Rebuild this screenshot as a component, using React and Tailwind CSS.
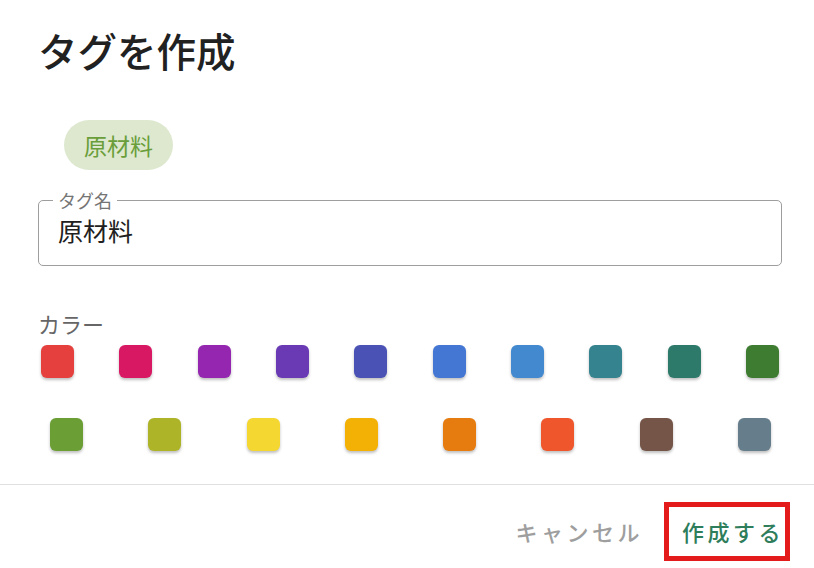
import React from "react";

const row1 = ["#e5403d", "#d91864", "#9526b0", "#6a3ab5", "#4a52b5", "#4477d4", "#4389d0", "#35838e", "#2d7a6a", "#3e7d31"];
const row2 = ["#6b9f35", "#adb428", "#f5d732", "#f3b105", "#e67c10", "#f0562c", "#745548", "#667d8c"];

function Swatch({ c }) {
  return <div className="w-[33px] h-[33px] rounded-[6px] shadow-[0_2px_3px_rgba(0,0,0,0.25)]" style={{ backgroundColor: c }} />;
}

export default function App() {
  const font = { fontFamily: '"Noto Sans CJK JP", "Noto Sans", sans-serif' };
  return (
    <div className="w-[814px] h-[568px] bg-white flex flex-col overflow-hidden" style={font}>
      <div className="pl-[38px] pr-[32px] pt-[22px]">
        <h1 className="text-[39.5px] leading-[56px] font-medium text-[#212121]">タグを作成</h1>
        <div className="mt-[42px] ml-[26px] flex">
          <span className="h-[50px] px-[20px] rounded-full bg-[#dde8cf] text-[#6a9e3a] text-[23px] flex items-center">原材料</span>
        </div>
        <div className="mt-[30px] relative h-[66px] border border-[#9e9e9e] rounded-[5px] flex items-center px-[19px]">
          <span className="absolute left-[14px] -top-[13px] bg-white px-[5px] text-[18px] leading-[24px] text-[#757575]">タグ名</span>
          <span className="text-[25px] text-[#212121] -mt-[4px]">原材料</span>
        </div>
        <div className="mt-[42px] text-[22px] leading-[30px] text-[#666666]">カラー</div>
        <div className="mt-[7px] px-[3px] flex justify-between">
          {row1.map((c) => <Swatch key={c} c={c} />)}
        </div>
        <div className="mt-[40px] pl-[12px] pr-[11px] flex justify-between">
          {row2.map((c) => <Swatch key={c} c={c} />)}
        </div>
      </div>
      <div className="mt-[33px] border-t border-[#e0e0e0] flex justify-end items-center pr-[24px] pt-[17px]">
        <span className="text-[22px] tracking-[3.5px] font-medium text-[#9e9e9e] mr-[21px]">キャンセル</span>
        <span className="border-[5px] border-[#e31b1b] h-[59px] pl-[13px] pr-[1px] flex items-center text-[22px] tracking-[3.5px] font-medium text-[#2e7d5b]">作成する</span>
      </div>
    </div>
  );
}
